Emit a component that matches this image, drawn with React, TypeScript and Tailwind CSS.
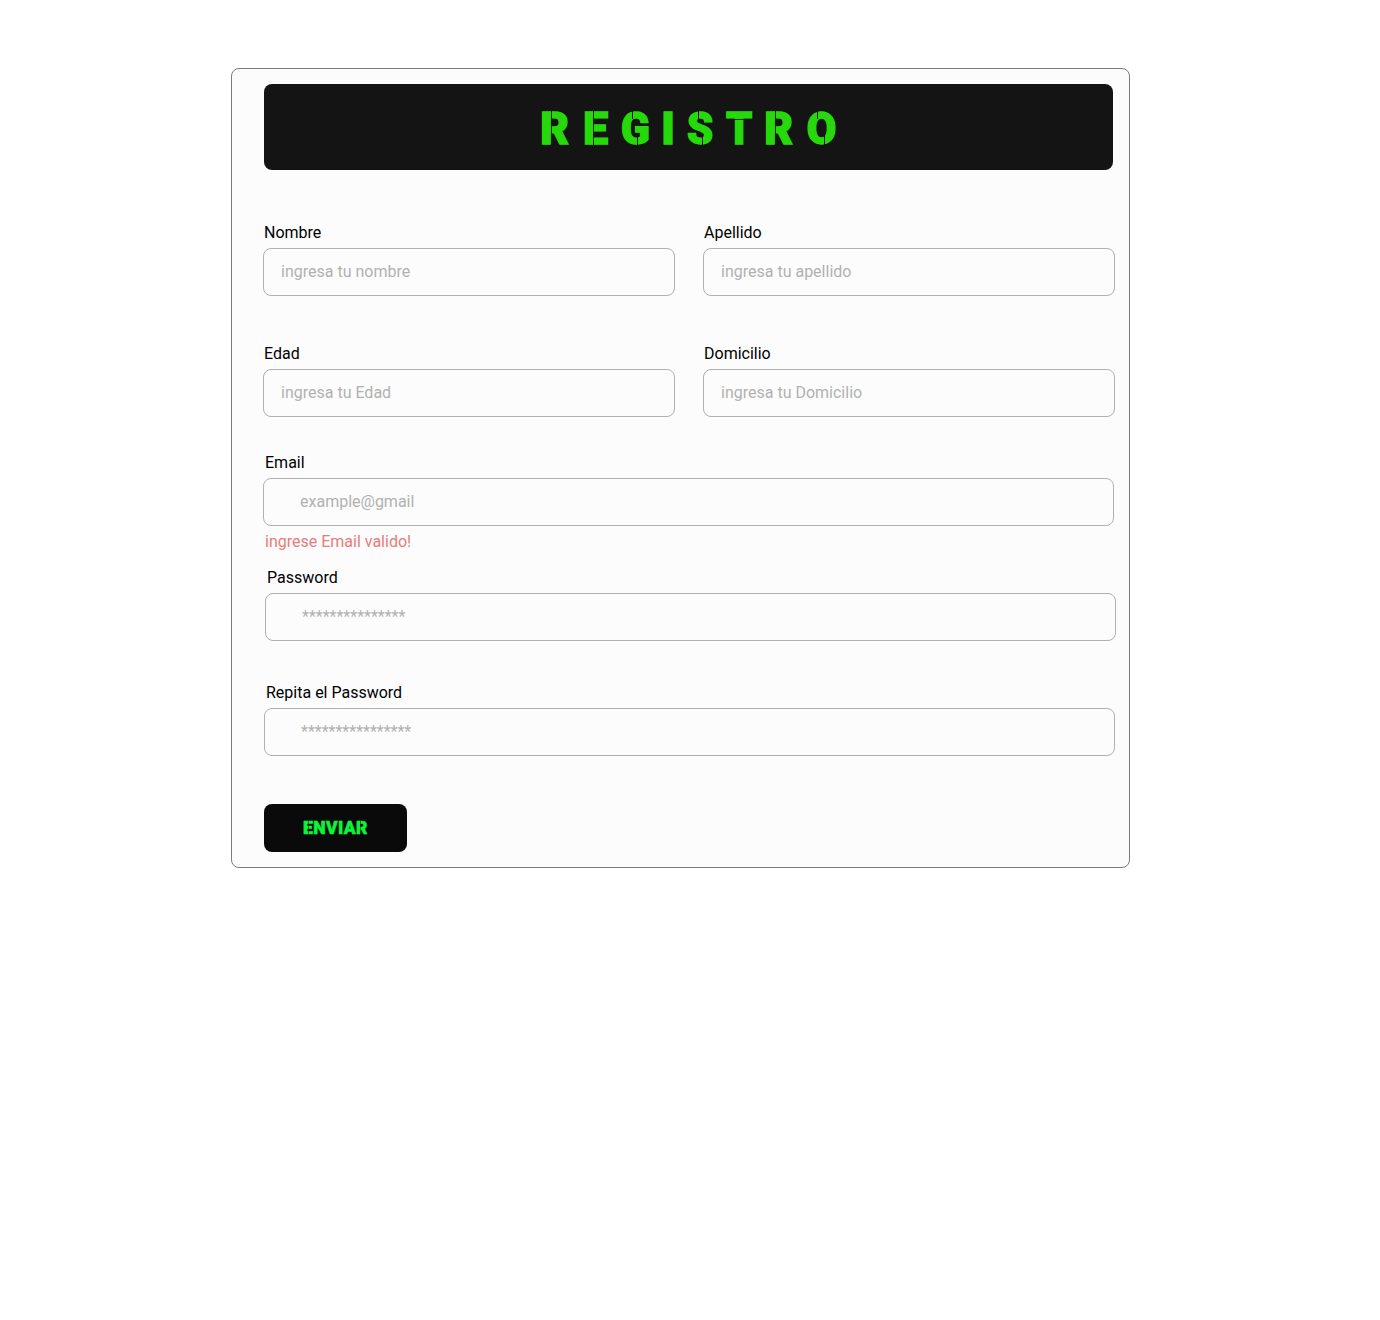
import React from "react";

type Glyph = { char: string; cell: string; scale: string; cuts: string[] };

// Each letter sits in its own cell; the cuts are the thin stencil bridges.
const title: Glyph[] = [
  { char: "R", cell: "w-[28px] mr-[14px]", scale: "scale-x-[.98]", cuts: ["left-[10px] top-0 h-full w-px"] },
  { char: "E", cell: "w-[25px] mr-[13px]", scale: "", cuts: ["left-[10px] top-0 h-full w-px"] },
  { char: "G", cell: "w-[28px] mr-[14px]", scale: "scale-x-[.94]", cuts: ["left-[11px] top-0 h-[35px] w-px", "left-[16px] bottom-0 h-[35px] w-px"] },
  { char: "I", cell: "w-[10px] mr-[14px]", scale: "", cuts: [] },
  { char: "S", cell: "w-[26px] mr-[12px] pl-px", scale: "scale-x-[.93]", cuts: ["left-[11px] top-0 h-[35px] w-px", "left-[15px] bottom-0 h-[35px] w-px"] },
  { char: "T", cell: "w-[27px] mr-[13px] pl-px", scale: "scale-x-[.93]", cuts: ["left-0 top-[35px] h-px w-full"] },
  { char: "R", cell: "w-[28px] mr-[13px]", scale: "scale-x-[.98]", cuts: ["left-[10px] top-0 h-full w-px"] },
  { char: "O", cell: "w-[29px] pl-[2px]", scale: "scale-x-[.95]", cuts: ["left-[11px] top-0 h-[35px] w-px", "left-[18px] bottom-0 h-[35px] w-px"] },
];

type FieldProps = { label: string; placeholder: string; inset?: string; labelInset?: string; className?: string };

function Field({ label, placeholder, inset = "pl-[17px]", labelInset = "pl-px", className = "" }: FieldProps) {
  return (
    <label className={`flex flex-col gap-[3px] ${className}`}>
      <span className={`h-[25px] pt-px leading-6 text-black ${labelInset}`}>{label}</span>
      <input
        type="text"
        placeholder={placeholder}
        className={`h-12 w-full rounded-lg border border-[#b0b0b0] bg-transparent pr-4 pb-0.5 leading-6 outline-none placeholder:text-[#b1b1b1] ${inset}`}
      />
    </label>
  );
}

export default function App() {
  return (
    <main className="min-h-[1320px] bg-white pt-[68px] pl-[231px] text-base font-[Roboto,sans-serif]">
      <form className="h-[800px] w-[899px] rounded-lg border border-[#7b7c74] bg-[#fcfcfc] pt-[15px] pl-[31px]">
        <h1 aria-label="REGISTRO" className="ml-px flex h-[86px] w-[849px] items-center rounded-lg bg-[#141414] pl-[277px] text-[45px] font-black text-[#26d90b]">
          {title.map((g, i) => (
            <span key={i} className={`relative flex h-[86px] shrink-0 items-center justify-center pt-[3px] ${g.cell}`}>
              <span className={`[-webkit-text-stroke:1.4px_#26d90b] ${g.scale}`}>{g.char}</span>
              {g.cuts.map((c) => (
                <i key={c} className={`absolute bg-[#141414] ${c}`} />
              ))}
            </span>
          ))}
        </h1>

        <div className="mt-[50px] grid w-[852px] grid-cols-[412px_412px] gap-x-7 gap-y-[45px]">
          <Field label="Nombre" placeholder="ingresa tu nombre" />
          <Field label="Apellido" placeholder="ingresa tu apellido" />
          <Field label="Edad" placeholder="ingresa tu Edad" />
          <Field label="Domicilio" placeholder="ingresa tu Domicilio" />
        </div>

        <Field className="mt-[33px] w-[851px]" label="Email" placeholder="example@gmail" inset="pl-9" labelInset="pl-0.5" />
        <p className="mt-1 h-6 pl-0.5 leading-6 text-[#e67c7c]">ingrese Email valido!</p>
        <Field className="mt-[11px] ml-0.5 w-[851px]" label="Password" placeholder="***************" inset="pl-9" labelInset="pl-0.5" />
        <Field className="mt-[39px] ml-px w-[851px]" label="Repita el Password" placeholder="****************" inset="pl-9" labelInset="pl-0.5" />

        <button type="button" className="mt-12 ml-px flex h-12 w-[143px] items-center justify-center rounded-lg bg-[#0a0a0a] text-[17.5px] font-black tracking-[0.4px] text-[#0bf53a]">
          <span className="relative [-webkit-text-stroke:0.5px_#0bf53a]">
            ENVIAR
            <i className="absolute top-0 left-[5px] h-full w-px bg-[#0a0a0a]/50" />
            <i className="absolute top-0 right-[7px] h-full w-px bg-[#0a0a0a]/50" />
          </span>
        </button>
      </form>
    </main>
  );
}
